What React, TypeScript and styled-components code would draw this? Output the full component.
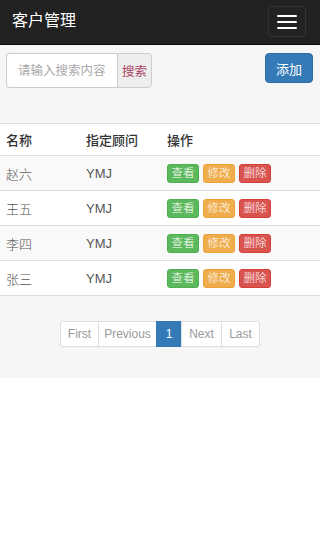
import React from "react";
import styled, { createGlobalStyle } from "styled-components";

const GlobalStyle = createGlobalStyle`
  html, body {
    margin: 0;
    padding: 0;
    background: #fff;
    font-family: "Helvetica Neue", "Liberation Sans", "Noto Sans CJK SC", sans-serif;
    color: #333;
  }
  * { box-sizing: border-box; }
`;

const Navbar = styled.div`
  height: 45px;
  background: #222;
  border-bottom: 1px solid #080808;
  display: flex;
  align-items: center;
  justify-content: space-between;
  padding: 0 14px 0 12px;
`;

const Brand = styled.div`
  color: #fff;
  font-size: 16px;
  line-height: 20px;
  margin-top: -2px;
`;

const Toggle = styled.button`
  width: 38px;
  height: 31px;
  margin-top: -1px;
  background: transparent;
  border: 1px solid #333;
  border-radius: 4px;
  display: flex;
  flex-direction: column;
  align-items: center;
  justify-content: center;
  gap: 4px;
  padding: 0;
`;

const IconBar = styled.span`
  display: block;
  width: 20px;
  height: 2px;
  border-radius: 1px;
  background: #fff;
`;

const Main = styled.div`
  background: #f6f6f6;
  padding: 8px 0 31px;
`;

const Toolbar = styled.div`
  display: flex;
  justify-content: space-between;
  align-items: flex-start;
  padding: 0 7px 0 6px;
`;

const SearchGroup = styled.div`
  display: flex;
  height: 35px;
`;

const SearchInput = styled.input`
  width: 111px;
  height: 35px;
  border: 1px solid #ccc;
  border-right: none;
  border-radius: 4px 0 0 4px;
  background: #fff;
  padding: 0 6px 0 11px;
  font-family: inherit;
  font-size: 12.5px;
  color: #555;
  &::placeholder { color: #aaa; }
`;

const SearchButton = styled.button`
  width: 35px;
  height: 35px;
  border: 1px solid #ccc;
  border-radius: 0 4px 4px 0;
  background: #eee;
  color: #a94462;
  font-family: inherit;
  font-size: 12.5px;
  padding: 0;
`;

const AddButton = styled.button`
  width: 48px;
  height: 30px;
  border: 1px solid #2e6da4;
  border-radius: 4px;
  background: #337ab7;
  color: #fff;
  font-family: inherit;
  font-size: 13px;
  padding: 0;
`;

const Table = styled.table`
  width: 100%;
  margin-top: 35px;
  border-collapse: collapse;
  background: #fff;
  font-size: 13px;
`;

const HeadCell = styled.th<{ $w?: number }>`
  width: ${(p) => (p.$w ? `${p.$w}px` : "auto")};
  height: 32px;
  text-align: left;
  font-weight: 500;
  padding: 0 6px;
  border-top: 1px solid #ddd;
  color: #333;
`;

const Row = styled.tr<{ $striped: boolean }>`
  background: ${(p) => (p.$striped ? "#f9f9f9" : "#fff")};
`;

const Cell = styled.td`
  height: 35px;
  padding: 0 6px;
  border-top: 1px solid #ddd;
  border-bottom: 1px solid #ddd;
  color: #555;
  font-weight: 300;
`;

const Actions = styled.div`
  display: flex;
  gap: 4px;
`;

const ActionButton = styled.button<{ $bg: string; $border: string }>`
  width: 32px;
  height: 19px;
  padding: 0;
  border: 1px solid ${(p) => p.$border};
  border-radius: 3px;
  background: ${(p) => p.$bg};
  color: #fff;
  font-family: inherit;
  font-size: 11.5px;
  font-weight: 300;
  line-height: 17px;
`;

const Pager = styled.ul`
  list-style: none;
  margin: 25px auto 0;
  padding: 0;
  display: flex;
  justify-content: center;
`;

const PageItem = styled.li<{ $active?: boolean; $w: number }>`
  width: ${(p) => p.$w}px;
  height: 26px;
  display: flex;
  align-items: center;
  justify-content: center;
  font-size: 12px;
  background: ${(p) => (p.$active ? "#337ab7" : "#fff")};
  color: ${(p) => (p.$active ? "#fff" : "#999")};
  border: 1px solid ${(p) => (p.$active ? "#337ab7" : "#ddd")};
  margin-left: -1px;
  &:first-child { border-radius: 3px 0 0 3px; margin-left: 0; }
  &:last-child { border-radius: 0 3px 3px 0; }
`;

const customers = [
  { name: "赵六", adviser: "YMJ" },
  { name: "王五", adviser: "YMJ" },
  { name: "李四", adviser: "YMJ" },
  { name: "张三", adviser: "YMJ" },
];

const pages = [
  { label: "First", w: 39 },
  { label: "Previous", w: 59 },
  { label: "1", w: 26, active: true },
  { label: "Next", w: 41 },
  { label: "Last", w: 39 },
];

export default function App() {
  return (
    <>
      <GlobalStyle />
      <Navbar>
        <Brand>客户管理</Brand>
        <Toggle>
          <IconBar />
          <IconBar />
          <IconBar />
        </Toggle>
      </Navbar>
      <Main>
        <Toolbar>
          <SearchGroup>
            <SearchInput placeholder="请输入搜索内容" />
            <SearchButton>搜索</SearchButton>
          </SearchGroup>
          <AddButton>添加</AddButton>
        </Toolbar>
        <Table>
          <thead>
            <tr>
              <HeadCell $w={80}>名称</HeadCell>
              <HeadCell $w={81}>指定顾问</HeadCell>
              <HeadCell>操作</HeadCell>
            </tr>
          </thead>
          <tbody>
            {customers.map((c, i) => (
              <Row key={c.name} $striped={i % 2 === 0}>
                <Cell>{c.name}</Cell>
                <Cell>{c.adviser}</Cell>
                <Cell>
                  <Actions>
                    <ActionButton $bg="#5cb85c" $border="#4cae4c">查看</ActionButton>
                    <ActionButton $bg="#f0ad4e" $border="#eea236">修改</ActionButton>
                    <ActionButton $bg="#d9534f" $border="#d43f3a">删除</ActionButton>
                  </Actions>
                </Cell>
              </Row>
            ))}
          </tbody>
        </Table>
        <Pager>
          {pages.map((p) => (
            <PageItem key={p.label} $w={p.w} $active={p.active}>
              {p.label}
            </PageItem>
          ))}
        </Pager>
      </Main>
    </>
  );
}
